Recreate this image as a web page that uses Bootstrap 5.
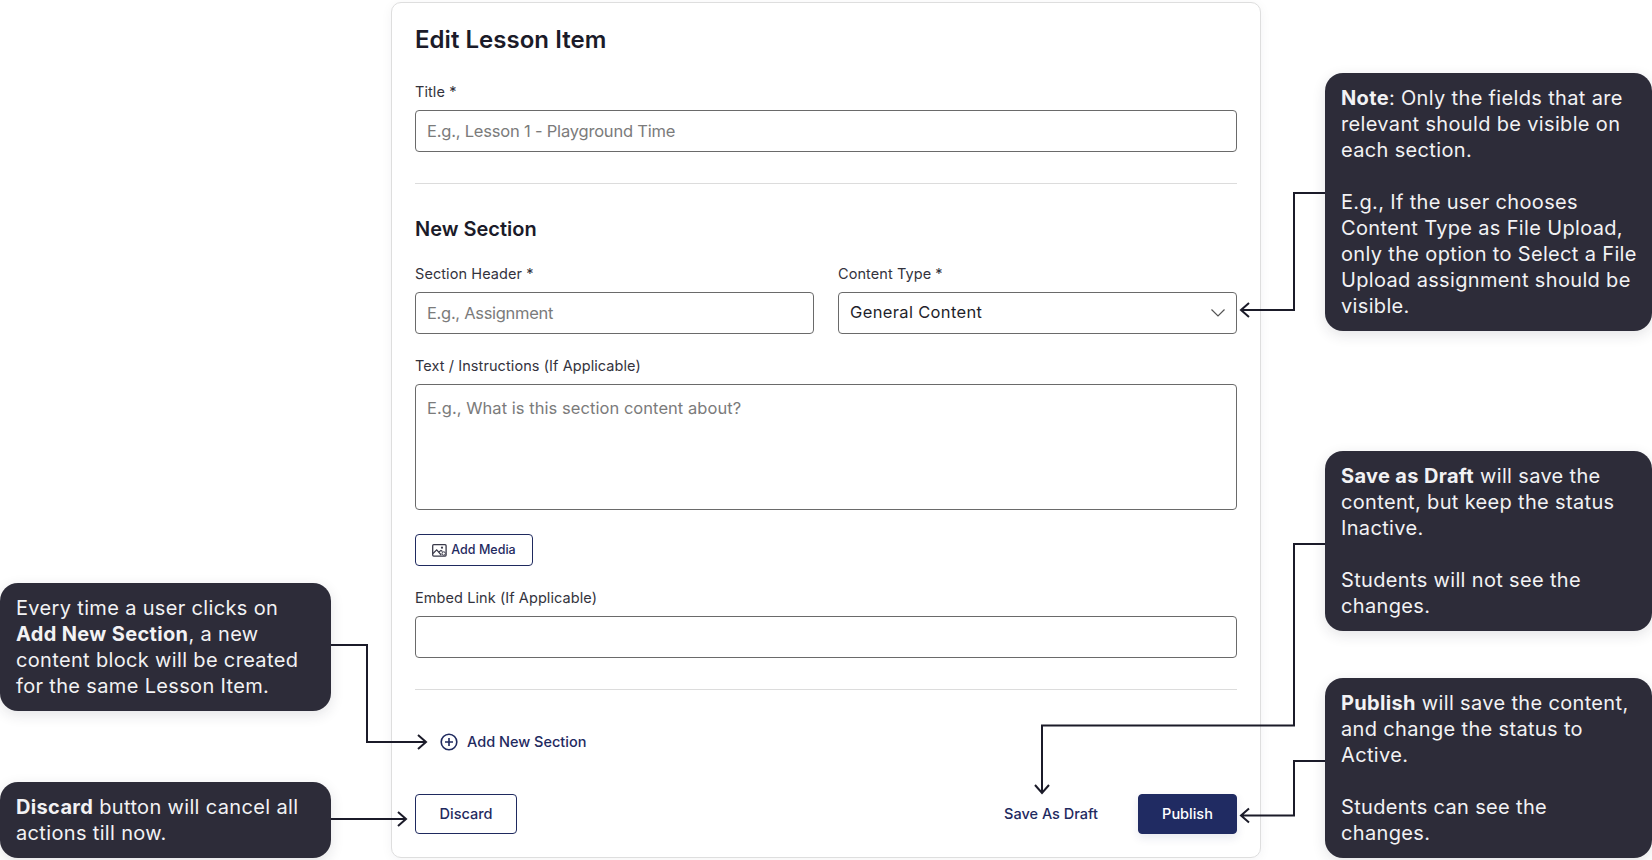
<!DOCTYPE html>
<html lang="en">
<head>
<meta charset="utf-8">
<title>Edit Lesson Item</title>
<link href="https://cdn.jsdelivr.net/npm/bootstrap@5.3.0/dist/css/bootstrap.min.css" rel="stylesheet">
<style>
html,body{height:860px;overflow:hidden;background:#fff}
body{font-family:"Inter","Liberation Sans",sans-serif;position:relative}
.lesson-shell{padding-top:2px}
.lesson-card{width:870px;height:856px;border:1px solid #dedede;border-radius:10px;padding:22px 23px 0;box-shadow:0 2px 12px rgba(30,30,50,.05);background:#fff}
.lesson-title{font-size:24px;font-weight:600;color:#1b1b29;line-height:29px;margin:0 0 29px;letter-spacing:.03px}
.sec-title{font-size:20px;font-weight:600;color:#1b1b29;line-height:24px;margin:0 0 24px}
.fld-label{font-size:14.5px;line-height:18px;color:#33333d;margin:0 0 9px;display:block;letter-spacing:.08px}
.fld-input.form-control,.fld-input.form-select{height:42px;border:1px solid #6a6a6a;border-radius:4px;font-size:16.5px;color:#1f1f2b;padding:0 11px 1px;box-shadow:none}
.fld-input.form-select{letter-spacing:.35px;background-size:16px 12px;background-position:right 10px center;background-image:url("data:image/svg+xml,%3csvg xmlns='http://www.w3.org/2000/svg' viewBox='0 0 16 12'%3e%3cpath fill='none' stroke='%23555' stroke-width='1.2' d='M1.5 2.5 8 9l6.5-6.5'/%3e%3c/svg%3e")}
.fld-input::placeholder{color:#7b7b7b;opacity:1}
.ph-title{letter-spacing:-.2px}
.ph-header{letter-spacing:-.3px}
.ph-long{letter-spacing:.05px}
textarea.fld-input.form-control{height:126px;padding-top:11px;resize:none}
.fld-rule{border:0;border-top:1px solid #dcdcdc;opacity:1;margin:0}
.rule-a{margin:31px 0 33px}
.rule-b{margin:31px 0 0}
.half-col{flex:1 1 0}
.pair-row{gap:24px;margin-bottom:23px}
.media-btn{height:32px;width:118px;font-size:12.5px;color:#1f2a5f;border:1px solid #1f2a5f;border-radius:4px;padding:0;font-weight:500;margin:24px 0 23px}
.add-sec{font-size:14.5px;color:#1f2a5f;font-weight:500;margin:40px 0 0 25px;height:24px;gap:9px}
.foot-row{margin-top:40px}
.foot-btn{height:40px;font-size:14.5px;border-radius:4px;font-weight:500;padding:0}
.btn-discard{width:102px;border:1px solid #1f2a5f;color:#1f2a5f;background:#fff}
.btn-draft{color:#1f2a5f;border:0;background:none;width:96px;margin-right:39px}
.btn-publish{width:99px;background:#202b62;color:#fff;border:1px solid #202b62;box-shadow:0 4px 10px rgba(31,42,95,.1)}
.note-box{position:absolute;background:#2d2c39;color:#f2f2f4;border-radius:18px;padding:12px 10px 11px 16px;font-size:20px;line-height:26px;letter-spacing:.34px;box-shadow:0 4px 14px rgba(30,30,50,.12);margin:0}
.note-box b{font-weight:700}
.n1{left:1325px;top:73px;width:327px;height:258px}
.n2{left:1325px;top:451px;width:327px;height:180px}
.n3{left:1325px;top:678px;width:327px;height:180px}
.n4{left:0;top:583px;width:331px;height:128px}
.n5{left:0;top:782px;width:331px;height:76px}
.arrow-layer{position:absolute;left:0;top:0;width:1652px;height:860px;pointer-events:none}
.arrow-layer path{fill:none;stroke:#1b1b29;stroke-width:2}
</style>
</head>
<body>
<div class="lesson-shell d-flex justify-content-center">
  <form class="lesson-card">
    <h1 class="lesson-title">Edit Lesson Item</h1>
    <label class="fld-label">Title *</label>
    <input class="form-control fld-input ph-title" placeholder="E.g., Lesson 1 - Playground Time">
    <hr class="fld-rule rule-a">
    <h2 class="sec-title">New Section</h2>
    <div class="d-flex pair-row">
      <div class="half-col">
        <label class="fld-label">Section Header *</label>
        <input class="form-control fld-input ph-header" placeholder="E.g., Assignment">
      </div>
      <div class="half-col">
        <label class="fld-label">Content Type *</label>
        <select class="form-select fld-input"><option>General Content</option></select>
      </div>
    </div>
    <label class="fld-label">Text / Instructions (If Applicable)</label>
    <textarea class="form-control fld-input ph-long" placeholder="E.g., What is this section content about?"></textarea>
    <button type="button" class="btn media-btn d-inline-flex align-items-center justify-content-center gap-1">
      <svg width="15" height="13" viewBox="0 0 15 13"><rect x=".7" y=".7" width="13.4" height="11.4" rx="1" fill="none" stroke="#3a3a4a" stroke-width="1.3"/><path d="M1 9.5l3.7-3.7 4.5 5.2M7 8l2-1.6 1.5 1" fill="none" stroke="#3a3a4a" stroke-width="1.2"/><circle cx="10" cy="3.7" r="1.1" fill="#3a3a4a"/><circle cx="11.7" cy="9.5" r="1.7" fill="#fff" stroke="#3a3a4a"/></svg>
      Add Media
    </button>
    <label class="fld-label">Embed Link (If Applicable)</label>
    <input class="form-control fld-input">
    <hr class="fld-rule rule-b">
    <div class="add-sec d-flex align-items-center">
      <svg width="18" height="18" viewBox="0 0 18 18"><circle cx="9" cy="9" r="7.8" fill="none" stroke="#1f2a5f" stroke-width="1.6"/><path d="M9 5v8M5 9h8" stroke="#1f2a5f" stroke-width="1.6"/></svg>
      <span>Add New Section</span>
    </div>
    <div class="d-flex align-items-center foot-row">
      <button type="button" class="btn foot-btn btn-discard">Discard</button>
      <button type="button" class="btn foot-btn btn-draft ms-auto">Save As Draft</button>
      <button type="button" class="btn foot-btn btn-publish">Publish</button>
    </div>
  </form>
</div>

<p class="note-box n1"><b>Note</b>: Only the fields that are relevant should be visible on each section.<br><br>E.g., If the user chooses Content Type as File Upload, only the option to Select a File Upload assignment should be visible.</p>
<p class="note-box n2"><b>Save as Draft</b> will save the content, but keep the status Inactive.<br><br>Students will not see the changes.</p>
<p class="note-box n3"><b>Publish</b> will save the content, and change the status to Active.<br><br>Students can see the changes.</p>
<p class="note-box n4">Every time a user clicks on <b>Add New Section</b>, a new content block will be created for the same Lesson Item.</p>
<p class="note-box n5"><b>Discard</b> button will cancel all actions till now.</p>

<svg class="arrow-layer" viewBox="0 0 1652 860">
  <path d="M1325 193H1294V310H1241M1249 303l-8 7 8 7"/>
  <path d="M1325 544H1294V725.500H1042V793M1035 785l7 8 7-8"/>
  <path d="M1325 761H1294V815.500H1241M1249 808.500l-8 7 8 7"/>
  <path d="M331 645H367V742H426M418 735l8 7-8 7"/>
  <path d="M331 819H406M398 812l8 7-8 7"/>
</svg>
</body>
</html>
